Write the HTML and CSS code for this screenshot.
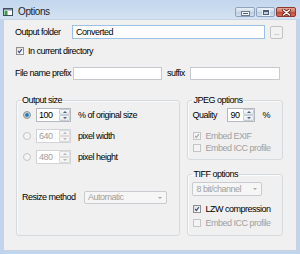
FILE: index.html
```html
<!DOCTYPE html>
<html lang="en">
<head>
  <meta charset="UTF-8" />
  <title>Options</title>
  <link rel="stylesheet" href="styles.css">
</head>
<body>
  <div class="window">
    <div class="titlebar">
      <svg class="app-icon" width="10" height="8" viewBox="0 0 10 8">
        <rect x="0.5" y="0.5" width="9" height="7" fill="#fff" stroke="#3f4d5c"/>
        <rect x="1" y="1" width="8" height="1.5" fill="#7b8fa5"/>
        <rect x="1.5" y="3" width="3" height="4" fill="#3c9a48"/>
      </svg>
      <span class="title">Options</span>
      <div class="caption-buttons">
        <span class="cap-btn"><span class="min-glyph"></span></span>
        <span class="cap-btn"><span class="max-glyph"></span></span>
        <span class="cap-btn close">
          <svg width="9" height="7" viewBox="0 0 9 7">
            <path d="M1.5 1 L7.5 6 M7.5 1 L1.5 6" stroke="#5a2118" stroke-width="3" stroke-linecap="round"/>
            <path d="M1.5 1 L7.5 6 M7.5 1 L1.5 6" stroke="#fff" stroke-width="1.6" stroke-linecap="round"/>
          </svg>
        </span>
      </div>
    </div>

    <div class="client">
      <div class="row folder-row">
        <span class="folder-lbl">Output folder</span>
        <div class="textbox focused folder-box">Converted</div>
        <span class="browse-btn">...</span>
      </div>

      <div class="row check-row">
        <span class="check checked"><svg viewBox="0 0 8 8"><path d="M1.5 4 L3.2 6 L6.5 1.5" /></svg></span>
        <span class="check-text">In current directory</span>
      </div>

      <div class="row prefix-row">
        <span class="prefix-lbl">File name prefix</span>
        <div class="textbox prefix-box"></div>
        <span class="suffix-lbl">suffix</span>
        <div class="textbox suffix-box"></div>
      </div>

      <div class="groups">
        <fieldset class="group size-group">
          <legend>Output size</legend>
          <div class="size-row">
            <span class="radio checked"></span>
            <div class="spin">
              <span class="spin-val">100</span>
              <span class="spin-btns"><span class="spin-btn"><i class="up"></i></span><span class="spin-btn"><i class="down"></i></span></span>
            </div>
            <span class="size-text">% of original size</span>
          </div>
          <div class="size-row">
            <span class="radio disabled"></span>
            <div class="spin disabled">
              <span class="spin-val">640</span>
              <span class="spin-btns"><span class="spin-btn"><i class="up"></i></span><span class="spin-btn"><i class="down"></i></span></span>
            </div>
            <span class="size-text">pixel width</span>
          </div>
          <div class="size-row">
            <span class="radio disabled"></span>
            <div class="spin disabled">
              <span class="spin-val">480</span>
              <span class="spin-btns"><span class="spin-btn"><i class="up"></i></span><span class="spin-btn"><i class="down"></i></span></span>
            </div>
            <span class="size-text">pixel height</span>
          </div>
          <div class="resize-row">
            <span class="resize-lbl">Resize method</span>
            <div class="combo resize-combo"><span>Automatic</span><i class="combo-arrow"></i></div>
          </div>
        </fieldset>

        <div class="side">
          <fieldset class="group jpeg-group">
            <legend>JPEG options</legend>
            <div class="quality-row">
              <span class="quality-lbl">Quality</span>
              <div class="spin quality-spin">
                <span class="spin-val">90</span>
                <span class="spin-btns"><span class="spin-btn"><i class="up"></i></span><span class="spin-btn"><i class="down"></i></span></span>
              </div>
              <span class="pct">%</span>
            </div>
            <div class="opt-row exif-row">
              <span class="check checked disabled"><svg viewBox="0 0 8 8"><path d="M1.5 4 L3.2 6 L6.5 1.5" /></svg></span>
              <span class="check-text muted">Embed EXIF</span>
            </div>
            <div class="opt-row">
              <span class="check disabled"></span>
              <span class="check-text muted">Embed ICC profile</span>
            </div>
          </fieldset>

          <fieldset class="group tiff-group">
            <legend>TIFF options</legend>
            <div class="combo tiff-combo"><span>8 bit/channel</span><i class="combo-arrow"></i></div>
            <div class="opt-row lzw-row">
              <span class="check checked"><svg viewBox="0 0 8 8"><path d="M1.5 4 L3.2 6 L6.5 1.5" /></svg></span>
              <span class="check-text">LZW compression</span>
            </div>
            <div class="opt-row icc-row">
              <span class="check disabled"></span>
              <span class="check-text muted">Embed ICC profile</span>
            </div>
          </fieldset>
        </div>
      </div>
    </div>
  </div>
</body>
</html>
```

FILE: styles.css
```css
* {
  box-sizing: border-box;
}

body {
  margin: 0;
  font-family: "Liberation Sans", Arial, sans-serif;
  font-size: 9px;
  line-height: 11px;
  letter-spacing: -0.5px;
  white-space: nowrap;
  color: #000;
}

.window {
  width: 300px;
  height: 254px;
  display: flex;
  flex-direction: column;
  background: #c0d5ec;
  padding: 0 3px 3px;
}

/* title bar */
.titlebar {
  height: 19px;
  margin: 0 -3px;
  padding: 6px 4px 0 3px;
  display: flex;
  align-items: flex-start;
  background: linear-gradient(#c2d6ed, #d4e2f2);
}

.app-icon {
  margin-top: 2px;
}

.title {
  margin-left: 5px;
  font-size: 10px;
  letter-spacing: -0.4px;
  color: #1e1e1e;
}

.caption-buttons {
  margin-left: auto;
  margin-top: 1px;
  display: flex;
  gap: 1px;
}

.cap-btn {
  width: 20px;
  height: 10px;
  border: 1px solid #8fa3bd;
  border-radius: 2px;
  background: linear-gradient(#e9f0f8, #cbd9ea 50%, #bccde3 51%, #d3e0ef);
  display: flex;
  align-items: center;
  justify-content: center;
}

.cap-btn:nth-child(2) {
  width: 19px;
}

.cap-btn.close {
  border-color: #8c3a30;
  background: linear-gradient(#e8a598, #d0705f 50%, #c24a36 51%, #d56b52);
}

.min-glyph {
  width: 7px;
  height: 3px;
  margin-top: 3px;
  background: #4e5b6c;
  border: 1px solid #f4f7fb;
  box-shadow: 0 0 0 1px #6c7a8c;
}

.max-glyph {
  width: 6px;
  height: 5px;
  border: 1px solid #4e5b6c;
  border-top-width: 2px;
  box-shadow: 0 0 0 1px #eef3f9;
}

/* client area */
.client {
  flex: 1;
  background: #f0f0f0;
  border: 1px solid #c5d3e3;
  padding: 5px 13px 0 11px;
}

.row {
  display: flex;
  align-items: center;
}

.textbox {
  background: #fff;
  border: 1px solid #c6cacf;
  padding: 0 3px;
  line-height: 12px;
}

.textbox.focused {
  border-color: #9cbfe5;
}

.folder-row {
  height: 14px;
}

.folder-lbl {
  width: 57px;
}

.folder-box {
  width: 193px;
  height: 14px;
}

.browse-btn {
  width: 13px;
  height: 13px;
  margin-left: 5px;
  border: 1px solid #c2c2c2;
  border-radius: 2px;
  background: #f2f2f2;
  color: #9a9a9a;
  font-size: 8px;
  line-height: 11px;
  text-align: center;
  letter-spacing: -0.5px;
}

.check-row {
  height: 8px;
  margin-top: 8px;
}

.check-row .check {
  margin-left: 1px;
}

.check {
  width: 8px;
  height: 8px;
  flex: none;
  border: 1px solid #8e8f8f;
  background: linear-gradient(135deg, #dcdcdc, #fff);
  display: flex;
}

.check svg {
  width: 6px;
  height: 6px;
  fill: none;
  stroke: #3d4e8a;
  stroke-width: 1.6;
}

.check.disabled {
  border-color: #c5c5c5;
  background: #f4f4f4;
}

.check.disabled svg {
  stroke: #a9a9a9;
}

.check-text {
  margin-left: 4px;
}

.muted {
  color: #a0a0a0;
}

.prefix-row {
  height: 13px;
  margin-top: 12px;
}

.prefix-lbl {
  width: 58px;
}

.prefix-box {
  width: 89px;
  height: 13px;
}

.suffix-lbl {
  width: 23px;
  margin-left: 5px;
}

.suffix-box {
  width: 90px;
  height: 13px;
}

/* group boxes */
.groups {
  display: flex;
  gap: 7px;
  margin-top: 15px;
  margin-left: 1px;
}

.group {
  margin: 0;
  min-width: 0;
  border: 1px solid #d5dadf;
  border-radius: 3px;
  box-shadow: inset 1px 1px 0 #fbfbfb;
}

.group legend {
  padding: 0 1px;
  line-height: 10px;
}

.size-group {
  width: 165px;
  padding: 3px 6px 0;
}

.size-group legend {
  margin-left: -2px;
}

.size-row {
  height: 14px;
  display: flex;
  align-items: center;
}

.size-row + .size-row {
  margin-top: 7px;
}

.radio {
  width: 8px;
  height: 8px;
  flex: none;
  border-radius: 50%;
  border: 1px solid #8e8f8f;
  background: radial-gradient(circle at 60% 60%, #f8f8f8, #dcdcdc);
}

.radio.checked {
  background: radial-gradient(circle, #1d5d8f 0, #3f8ec4 1.5px, #bcd2e2 2.5px, #e2e2e2 3.5px);
}

.radio.disabled {
  border-color: #c5c5c5;
  background: #f4f4f4;
}

.spin {
  width: 35px;
  height: 14px;
  margin-left: 5px;
  display: flex;
  background: #fff;
  border: 1px solid #b5b9bf;
}

.spin.disabled {
  border-color: #d2d4d7;
  color: #a0a0a0;
}

.spin-val {
  flex: 1;
  padding-left: 2px;
  line-height: 12px;
}

.spin-btns {
  width: 11px;
  display: flex;
  flex-direction: column;
}

.spin-btn {
  flex: 1;
  border: 1px solid #c8ced6;
  border-radius: 1px;
  background: linear-gradient(#f6f8fb, #e3e8ef);
  display: flex;
  align-items: center;
  justify-content: center;
}

.spin.disabled .spin-btn {
  border-color: #dadada;
  background: #f4f4f4;
}

.spin-btn i {
  width: 0;
  height: 0;
  border-left: 2px solid transparent;
  border-right: 2px solid transparent;
}

.spin-btn .up {
  border-bottom: 2px solid #4b5f80;
}

.spin-btn .down {
  border-top: 2px solid #4b5f80;
}

.spin.disabled .spin-btn .up {
  border-bottom-color: #b5b5b5;
}

.spin.disabled .spin-btn .down {
  border-top-color: #b5b5b5;
}

.size-text {
  margin-left: 7px;
}

.resize-row {
  display: flex;
  align-items: center;
  height: 13px;
  margin-top: 27px;
  margin-left: -1px;
}

.resize-lbl {
  width: 62px;
}

.combo {
  height: 13px;
  display: flex;
  align-items: center;
  padding: 0 4px 0 3px;
  background: #f6f6f6;
  border: 1px solid #c8cbcf;
  border-radius: 2px;
  color: #a0a0a0;
}

.combo span {
  flex: 1;
}

.combo-arrow {
  width: 0;
  height: 0;
  border-left: 2.5px solid transparent;
  border-right: 2.5px solid transparent;
  border-top: 2.5px solid #a8a8a8;
}

.resize-combo {
  width: 83px;
}

.side {
  width: 96px;
  display: flex;
  flex-direction: column;
}

.jpeg-group {
  padding: 3px 4px 6px;
}

.quality-row {
  display: flex;
  align-items: center;
  height: 14px;
}

.quality-lbl {
  width: 35px;
}

.quality-spin {
  width: 28px;
  margin-left: 0;
}

.pct {
  margin-left: 7px;
}

.opt-row {
  display: flex;
  align-items: center;
  height: 10px;
  margin-top: 2px;
}

.opt-row .check {
  margin-left: 1px;
}

.exif-row {
  margin-top: 9px;
}

.tiff-group {
  margin-top: 9px;
  padding: 3px 4px 7px;
}

.tiff-combo {
  width: 70px;
  height: 14px;
}

.lzw-row {
  margin-top: 8px;
}

.icc-row {
  margin-top: 4px;
}
```
